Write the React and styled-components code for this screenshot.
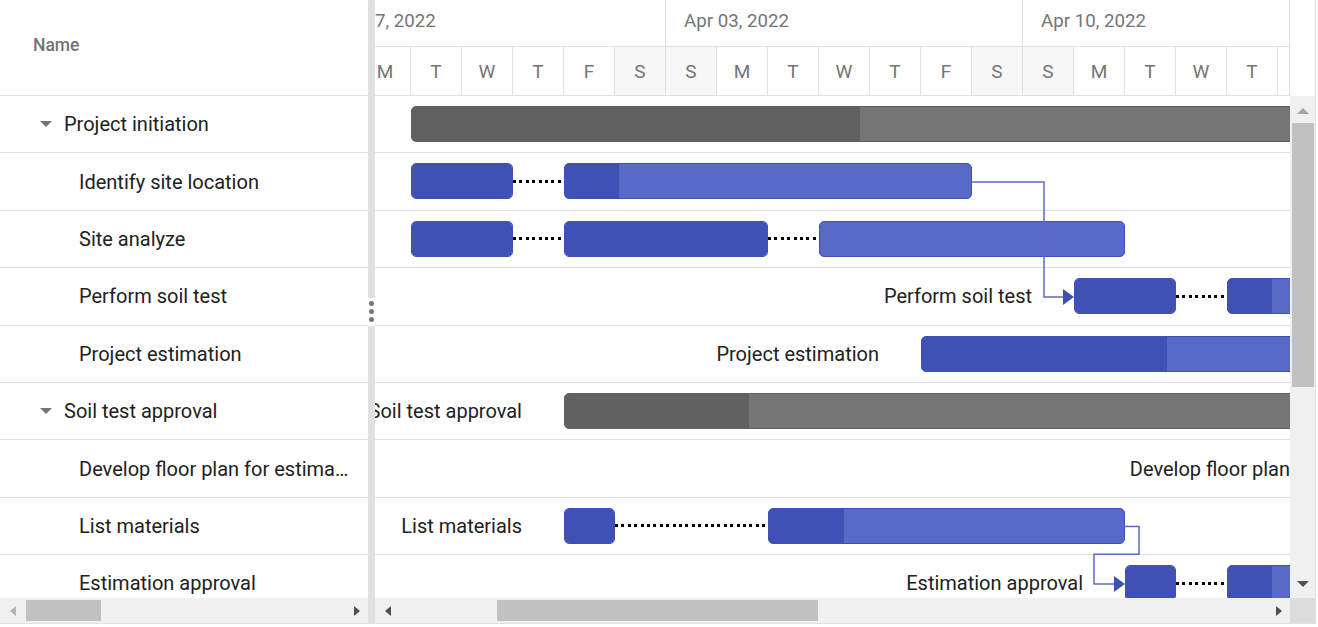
import React from 'react';
import styled, { createGlobalStyle, css } from 'styled-components';

const DAY = 51;
const ROW_H = 57.4;
const OFFSET = 66; // scrolled past the start of Mar 27
const DAYS = 30;

const GlobalStyle = createGlobalStyle`
  html, body {
    margin: 0;
    padding: 0;
    background: #fff;
  }
  body {
    font-family: Roboto, "Liberation Sans", Arial, sans-serif;
    color: #212121;
  }
`;

const Gantt = styled.div`
  display: flex;
  width: 1316px;
  height: 624px;
  box-sizing: border-box;
  border-right: 1px solid #e0e0e0;
  border-bottom: 1px solid #e0e0e0;
  overflow: hidden;
`;

/* ---------- left grid ---------- */

const LeftPane = styled.div`
  width: 368px;
  flex: none;
  display: flex;
  flex-direction: column;
`;

const GridHeader = styled.div`
  height: 96px;
  flex: none;
  box-sizing: border-box;
  border-bottom: 1px solid #e0e0e0;
  display: flex;
  align-items: center;
  padding: 0 0 5px 33px;
  font-size: 17.5px;
  font-weight: 500;
  color: #757575;
`;

const GridBody = styled.div`
  flex: 1;
  overflow: hidden;
`;

const GridRow = styled.div`
  height: ${ROW_H}px;
  box-sizing: border-box;
  border-bottom: 1px solid #e0e0e0;
  display: flex;
  align-items: center;
  padding-left: ${p => (p.$parent ? 40 : 79)}px;
  font-size: 20px;
  white-space: nowrap;
  overflow: hidden;
`;

const RowText = styled.span`
  overflow: hidden;
  text-overflow: ellipsis;
  padding-right: 18px;
`;

const Caret = styled.span`
  width: 0;
  height: 0;
  border-left: 6px solid transparent;
  border-right: 6px solid transparent;
  border-top: 6px solid #757575;
  margin-right: 12px;
  flex: none;
`;

/* ---------- scrollbars ---------- */

const HScroll = styled.div`
  height: 25px;
  flex: ${p => (p.$grow ? 1 : 'none')};
  background: #f0f0f0;
  display: flex;
  align-items: center;
  padding: 0 8px 0 10px;
  box-sizing: border-box;
`;

const ScrollTrack = styled.div`
  flex: 1;
  height: 21px;
  margin: 0 6px 0 ${p => p.$lead || 6}px;
  display: flex;
  align-items: stretch;
`;

const Thumb = styled.div`
  background: #c1c1c1;
`;

const Arrow = styled.span`
  width: 0;
  height: 0;
  flex: none;
  ${p =>
    p.$dir === 'left' &&
    css`
      border-top: 5px solid transparent;
      border-bottom: 5px solid transparent;
      border-right: 6px solid ${p.$dim ? '#b3b3b3' : '#505050'};
    `}
  ${p =>
    p.$dir === 'right' &&
    css`
      border-top: 5px solid transparent;
      border-bottom: 5px solid transparent;
      border-left: 6px solid ${p.$dim ? '#b3b3b3' : '#505050'};
    `}
  ${p =>
    p.$dir === 'up' &&
    css`
      border-left: 6px solid transparent;
      border-right: 6px solid transparent;
      border-bottom: 6px solid ${p.$dim ? '#a3a3a3' : '#505050'};
    `}
  ${p =>
    p.$dir === 'down' &&
    css`
      border-left: 6px solid transparent;
      border-right: 6px solid transparent;
      border-top: 6px solid ${p.$dim ? '#a3a3a3' : '#505050'};
    `}
`;

const VScroll = styled.div`
  width: 25px;
  flex: none;
  background: #f0f0f0;
  display: flex;
  flex-direction: column;
  align-items: center;
  padding: 12px 0 11px;
  box-sizing: border-box;
`;

const VTrack = styled.div`
  flex: 1;
  align-self: stretch;
  margin: 9px 1px 0 2px;
  display: flex;
  flex-direction: column;
`;

const Corner = styled.div`
  width: 25px;
  flex: none;
  background: #dcdcdc;
`;

/* ---------- splitter ---------- */

const Splitter = styled.div`
  width: 7px;
  flex: none;
  background: #e0e0e0;
  display: flex;
  align-items: center;
  justify-content: center;
`;

const Handle = styled.div`
  width: 7px;
  height: 28px;
  background: #fff;
  display: flex;
  flex-direction: column;
  align-items: center;
  justify-content: center;
  gap: 3px;
`;

const Dot = styled.span`
  width: 5px;
  height: 5px;
  border-radius: 50%;
  background: #757575;
`;

/* ---------- chart side ---------- */

const RightPane = styled.div`
  flex: 1;
  display: flex;
  flex-direction: column;
  min-width: 0;
`;

const Strip = styled.div`
  display: flex;
  height: ${p => p.$h || 'auto'};
  flex: ${p => (p.$grow ? 1 : 'none')};
  min-height: 0;
`;

const Viewport = styled.div`
  width: 915px;
  flex: none;
  overflow: hidden;
  box-sizing: border-box;
  ${p => p.$header && 'border-bottom: 1px solid #e0e0e0; border-right: 1px solid #e0e0e0;'}
`;

const HeaderFiller = styled.div`
  flex: 1;
  background: #fff;
`;

const Canvas = styled.div`
  width: ${DAYS * DAY}px;
  margin-left: -${OFFSET}px;
  position: relative;
`;

const Tier = styled.div`
  display: flex;
  height: ${p => p.$h}px;
  box-sizing: border-box;
  border-bottom: ${p => (p.$line ? '1px solid #e0e0e0' : 'none')};
`;

const WeekCell = styled.div`
  width: ${7 * DAY}px;
  flex: none;
  box-sizing: border-box;
  border-right: 1px solid #e0e0e0;
  display: flex;
  align-items: center;
  padding: 0 0 4px 18px;
  font-size: 18.7px;
  color: #757575;
`;

const DayCell = styled.div`
  width: ${DAY}px;
  flex: none;
  box-sizing: border-box;
  border-right: 1px solid #e0e0e0;
  background: ${p => (p.$weekend ? '#f7f7f7' : '#fff')};
  display: flex;
  align-items: center;
  justify-content: center;
  font-size: 19px;
  color: #757575;
`;

const ChartRow = styled.div`
  height: ${ROW_H}px;
  box-sizing: border-box;
  border-bottom: 1px solid #e0e0e0;
  position: relative;
`;

const Bar = styled.div`
  position: absolute;
  top: 10px;
  height: 36px;
  box-sizing: border-box;
  border-radius: 5px;
  overflow: hidden;
  border: 1px solid ${p => (p.$parent ? '#616161' : '#3f51b5')};
  background: ${p => (p.$parent ? '#757575' : '#5869c8')};
`;

const Progress = styled.div`
  height: 100%;
  background: ${p => (p.$parent ? '#616161' : '#3f51b5')};
`;

const Dotted = styled.div`
  position: absolute;
  top: 26.5px;
  height: 3px;
  background: repeating-linear-gradient(to right, #000 0 3px, transparent 3px 6.4px);
`;

const Label = styled.div`
  position: absolute;
  top: 0;
  bottom: 0;
  display: flex;
  align-items: center;
  font-size: 20px;
  color: #212121;
  white-space: nowrap;
`;

const Links = styled.svg`
  position: absolute;
  left: 0;
  top: 0;
  pointer-events: none;
`;

/* ---------- data ---------- */

const tasks = [
  { name: 'Project initiation', parent: true, segs: [{ s: 2, d: 19, p: 448 }] },
  { name: 'Identify site location', segs: [{ s: 2, d: 2, p: 102 }, { s: 5, d: 8, p: 54 }] },
  { name: 'Site analyze', segs: [{ s: 2, d: 2, p: 102 }, { s: 5, d: 4, p: 204 }, { s: 10, d: 6, p: 0 }] },
  { name: 'Perform soil test', label: true, segs: [{ s: 15, d: 2, p: 102 }, { s: 18, d: 3, p: 44 }] },
  { name: 'Project estimation', label: true, segs: [{ s: 12, d: 8, p: 245 }] },
  { name: 'Soil test approval', parent: true, label: true, segs: [{ s: 5, d: 16, p: 184 }] },
  { name: 'Develop floor plan for estimation', gridName: 'Develop floor plan for estima…', label: true, segs: [{ s: 22.6, d: 3, p: 0 }] },
  { name: 'List materials', label: true, segs: [{ s: 5, d: 1, p: 51 }, { s: 9, d: 7, p: 75 }] },
  { name: 'Estimation approval', label: true, segs: [{ s: 16, d: 1, p: 51 }, { s: 18, d: 3, p: 44 }] },
];

const weeks = ['Mar 27, 2022', 'Apr 03, 2022', 'Apr 10, 2022', 'Apr 17, 2022', 'Apr 24, 2022'];
const letters = ['S', 'M', 'T', 'W', 'T', 'F', 'S'];

const center = i => ROW_H * i + ROW_H / 2;

const TaskBars = ({ task }) => {
  const segs = task.segs;
  const first = segs[0].s * DAY;
  return (
    <>
      {task.label && (
        <Label style={{ right: DAYS * DAY - (first - 42) }}>{task.name}</Label>
      )}
      {segs.map((g, i) => (
        <React.Fragment key={i}>
          {i > 0 && (
            <Dotted
              style={{
                left: (segs[i - 1].s + segs[i - 1].d) * DAY,
                width: (g.s - segs[i - 1].s - segs[i - 1].d) * DAY,
              }}
            />
          )}
          <Bar $parent={task.parent} style={{ left: g.s * DAY, width: g.d * DAY }}>
            <Progress $parent={task.parent} style={{ width: g.p }} />
          </Bar>
        </React.Fragment>
      ))}
    </>
  );
};

const Connector = ({ points, tip }) => (
  <>
    <polyline
      points={points.map(p => p.join(',')).join(' ')}
      fill="none"
      stroke="#5c6bc0"
      strokeWidth="1.5"
    />
    <polygon
      points={`${tip[0] - 11},${tip[1] - 8} ${tip[0]},${tip[1]} ${tip[0] - 11},${tip[1] + 8}`}
      fill="#3f51b5"
    />
  </>
);

export default function App() {
  const r1 = center(1);
  const r3 = center(3);
  const r7 = center(7);
  const r8 = center(8);
  return (
    <>
      <GlobalStyle />
      <Gantt>
        <LeftPane>
          <GridHeader>Name</GridHeader>
          <GridBody>
            {tasks.map(t => (
              <GridRow key={t.name} $parent={t.parent}>
                {t.parent && <Caret />}
                <RowText>{t.gridName || t.name}</RowText>
              </GridRow>
            ))}
          </GridBody>
          <HScroll>
            <Arrow $dir="left" $dim />
            <ScrollTrack $lead={10}>
              <Thumb style={{ width: 75 }} />
            </ScrollTrack>
            <Arrow $dir="right" />
          </HScroll>
        </LeftPane>

        <Splitter>
          <Handle>
            <Dot />
            <Dot />
            <Dot />
          </Handle>
        </Splitter>

        <RightPane>
          <Strip $h="96px">
            <Viewport $header>
              <Canvas>
                <Tier $h={47} $line>
                  {weeks.map(w => (
                    <WeekCell key={w}>{w}</WeekCell>
                  ))}
                </Tier>
                <Tier $h={48}>
                  {Array.from({ length: DAYS }, (_, i) => (
                    <DayCell key={i} $weekend={i % 7 === 0 || i % 7 === 6}>
                      {letters[i % 7]}
                    </DayCell>
                  ))}
                </Tier>
              </Canvas>
            </Viewport>
            <HeaderFiller />
          </Strip>

          <Strip $grow>
            <Viewport>
              <Canvas>
                {tasks.map(t => (
                  <ChartRow key={t.name}>
                    <TaskBars task={t} />
                  </ChartRow>
                ))}
                <Links width={DAYS * DAY} height={ROW_H * tasks.length}>
                  <Connector
                    points={[[663, r1], [735, r1], [735, r3], [754, r3]]}
                    tip={[765, r3]}
                  />
                  <Connector
                    points={[[814, r7], [830, r7], [830, ROW_H * 8 - 1], [785, ROW_H * 8 - 1], [785, r8], [805, r8]]}
                    tip={[816, r8]}
                  />
                </Links>
              </Canvas>
            </Viewport>
            <VScroll>
              <Arrow $dir="up" $dim />
              <VTrack>
                <Thumb style={{ height: 264 }} />
              </VTrack>
              <Arrow $dir="down" />
            </VScroll>
          </Strip>

          <Strip $h="25px">
            <HScroll $grow>
              <Arrow $dir="left" />
              <ScrollTrack>
                <div style={{ width: 100 }} />
                <Thumb style={{ width: 321 }} />
              </ScrollTrack>
              <Arrow $dir="right" />
            </HScroll>
            <Corner />
          </Strip>
        </RightPane>
      </Gantt>
    </>
  );
}
